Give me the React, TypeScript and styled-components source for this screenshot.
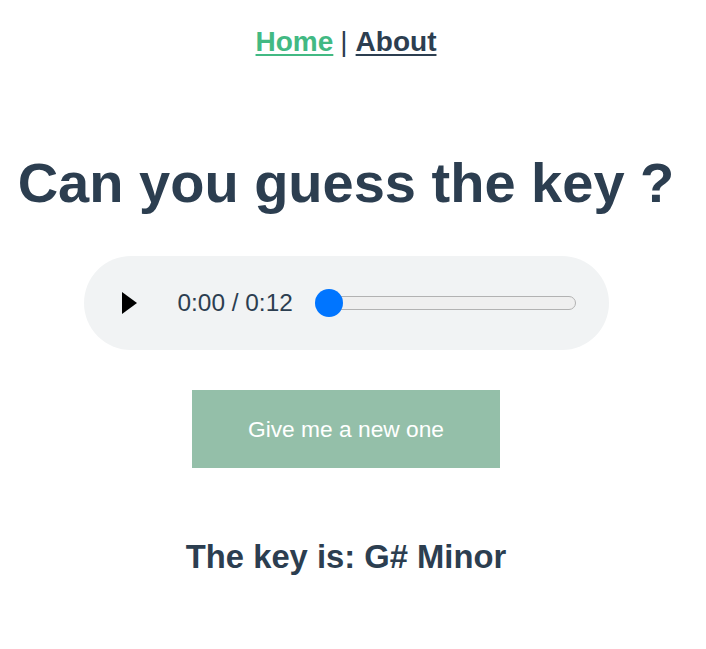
import { FC } from 'react'
import styled, { createGlobalStyle } from 'styled-components'

const GlobalStyle = createGlobalStyle`
  html, body {
    margin: 0;
    padding: 0;
    background: #fff;
  }
  body {
    font-family: 'Liberation Sans', Arial, Helvetica, sans-serif;
    -webkit-font-smoothing: antialiased;
    color: #2c3e50;
  }
`

const Page = styled.div`
  display: flex;
  flex-direction: column;
  align-items: center;
  width: 692px;
  text-align: center;
`

const Nav = styled.nav`
  padding-top: 26px;
  font-size: 28px;
  line-height: 32px;
  font-weight: bold;
`

const NavLink = styled.a<{ $active?: boolean }>`
  color: ${({ $active }) => ($active ? '#42b983' : '#2c3e50')};
  text-decoration: underline;
  text-underline-offset: 3px;
  text-decoration-thickness: 2px;
  cursor: pointer;
`

const Divider = styled.span`
  font-weight: normal;
  margin: 0 8px 0 7px;
`

const Title = styled.h1`
  margin: 93px 0 0;
  font-size: 56px;
  line-height: 64px;
  font-weight: bold;
  white-space: nowrap;
`

const Player = styled.div`
  margin-top: 41px;
  width: 525px;
  height: 94px;
  box-sizing: border-box;
  padding: 0 33px 0 38px;
  border-radius: 47px;
  background: #f1f3f4;
  display: flex;
  align-items: center;
`

const PlayButton = styled.button`
  width: 16px;
  height: 22px;
  padding: 0;
  border: 0;
  background: none;
  display: flex;
  align-items: center;
  cursor: pointer;
`

const Time = styled.span`
  margin-left: 40px;
  font-size: 24.4px;
  line-height: 26px;
  color: #2c3e50;
  white-space: nowrap;
`

const Track = styled.div`
  position: relative;
  margin-left: 23px;
  flex: 1;
  height: 14px;
  box-sizing: border-box;
  border: 1px solid #b2b2b2;
  border-radius: 7px;
  background: #efefef;
`

const Thumb = styled.div`
  position: absolute;
  left: -2px;
  top: 50%;
  width: 28px;
  height: 28px;
  margin-top: -14px;
  border-radius: 50%;
  background: #0075ff;
`

const NewButton = styled.button`
  margin-top: 40px;
  width: 308px;
  height: 78px;
  border: 0;
  background: #94bfa9;
  color: #fff;
  font-family: inherit;
  font-size: 22.75px;
  cursor: pointer;
`

const Answer = styled.h3`
  margin: 70px 0 0;
  font-size: 32.76px;
  line-height: 38px;
  font-weight: bold;
`

const App: FC = () => {
  return (
    <>
      <GlobalStyle />
      <Page>
        <Nav>
          <NavLink $active>Home</NavLink>
          <Divider>|</Divider>
          <NavLink>About</NavLink>
        </Nav>
        <Title>Can you guess the key ?</Title>
        <Player>
          <PlayButton aria-label="play">
            <svg width="16" height="22" viewBox="0 0 16 22">
              <path d="M0 0 L15 11 L0 22 Z" fill="#000" />
            </svg>
          </PlayButton>
          <Time>0:00 / 0:12</Time>
          <Track>
            <Thumb />
          </Track>
        </Player>
        <NewButton>Give me a new one</NewButton>
        <Answer>The key is: G# Minor</Answer>
      </Page>
    </>
  )
}

export default App
